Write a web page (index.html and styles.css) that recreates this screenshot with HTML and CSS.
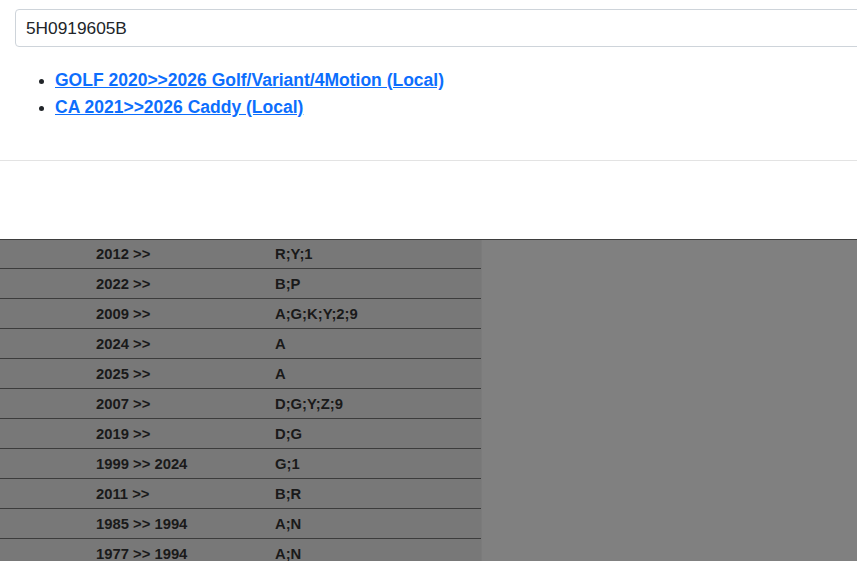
FILE: index.html
```html
<!DOCTYPE html>
<html>
<head>
<meta charset="utf-8">
<link rel="stylesheet" href="styles.css">
</head>
<body>
<div class="page">
  <div class="search">
    <input class="search-input" type="text" value="5H0919605B">
  </div>
  <ul class="results">
    <li><a href="#">GOLF 2020&gt;&gt;2026 Golf/Variant/4Motion (Local)</a></li>
    <li><a href="#">CA 2021&gt;&gt;2026 Caddy (Local)</a></li>
  </ul>
  <hr class="divider">
  <div class="spacer"></div>
  <div class="shade">
    <table class="data">
      <tbody>
        <tr><td></td><td>2012 &gt;&gt;</td><td>R;Y;1</td></tr>
        <tr><td></td><td>2022 &gt;&gt;</td><td>B;P</td></tr>
        <tr><td></td><td>2009 &gt;&gt;</td><td>A;G;K;Y;2;9</td></tr>
        <tr><td></td><td>2024 &gt;&gt;</td><td>A</td></tr>
        <tr><td></td><td>2025 &gt;&gt;</td><td>A</td></tr>
        <tr><td></td><td>2007 &gt;&gt;</td><td>D;G;Y;Z;9</td></tr>
        <tr><td></td><td>2019 &gt;&gt;</td><td>D;G</td></tr>
        <tr><td></td><td>1999 &gt;&gt; 2024</td><td>G;1</td></tr>
        <tr><td></td><td>2011 &gt;&gt;</td><td>B;R</td></tr>
        <tr><td></td><td>1985 &gt;&gt; 1994</td><td>A;N</td></tr>
        <tr><td></td><td>1977 &gt;&gt; 1994</td><td>A;N</td></tr>
      </tbody>
    </table>
  </div>
</div>
</body>
</html>
```

FILE: styles.css
```css
html, body {
  margin: 0;
  padding: 0;
  background: #ffffff;
  overflow: hidden;
}
body {
  font-family: "Liberation Sans", Arial, sans-serif;
  color: #212529;
}
.page {
  width: 857px;
  height: 561px;
  overflow: hidden;
}
.search {
  padding: 9px 0 0 15px;
}
.search-input {
  display: block;
  box-sizing: border-box;
  width: 900px;
  height: 38px;
  margin: 0;
  padding: 6px 10px;
  border: 1px solid #ced4da;
  border-radius: 4px;
  font-family: "Liberation Sans", Arial, sans-serif;
  font-size: 17.3px;
  color: #212529;
  background: #fff;
  outline: none;
}
.results {
  margin: 20px 0 0 0;
  padding-left: 55px;
  list-style: disc;
}
.results li {
  font-size: 17.5px;
  line-height: 27px;
  font-weight: bold;
}
.results li::marker {
  font-size: 16px;
}
.results a {
  color: #0d6efd;
  text-decoration: underline;
}
.divider {
  margin: 39px 0 0 0;
  border: 0;
  border-top: 1px solid #e3e3e3;
  height: 0;
}
.spacer {
  height: 78px;
}
.shade {
  background: #808080;
  border-top: 1px solid #3e3e3e;
  height: 400px;
}
.data {
  width: 481px;
  border-collapse: collapse;
  background: #787878;
  box-shadow: 1px 0 0 #7b7b7b;
}
.data td {
  height: 29px;
  padding: 0;
  border-bottom: 1px solid #3c3c3c;
  font-size: 14.8px;
  font-weight: bold;
  color: #1a1a1a;
  vertical-align: middle;
}
.data tr:first-child td {
  height: 28px;
}
.data td:nth-child(1) {
  width: 96px;
}
.data td:nth-child(2) {
  width: 179px;
}
```
